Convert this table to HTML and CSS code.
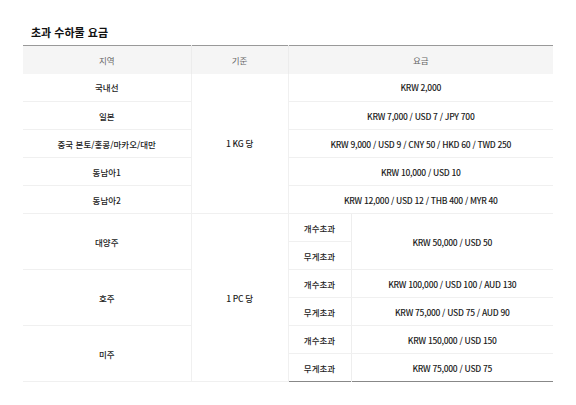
FILE: index.html
```html
<!DOCTYPE html>
<html lang="ko">
<head>
<meta charset="utf-8">
<link rel="stylesheet" href="styles.css">
</head>
<body>
<div class="page">
  <h2 class="title">초과 수하물 요금</h2>
  <table class="fee">
    <colgroup>
      <col class="c-region">
      <col class="c-basis">
      <col class="c-sub">
      <col class="c-fee">
    </colgroup>
    <thead>
      <tr><th>지역</th><th>기준</th><th colspan="2">요금</th></tr>
    </thead>
    <tbody>
      <tr><td>국내선</td><td rowspan="5" class="basis">1 KG 당</td><td colspan="2" class="price">KRW 2,000</td></tr>
      <tr><td>일본</td><td colspan="2" class="price">KRW 7,000 / USD 7 / JPY 700</td></tr>
      <tr><td>중국 본토/홍콩/마카오/대만</td><td colspan="2" class="price">KRW 9,000 / USD 9 / CNY 50 / HKD 60 / TWD 250</td></tr>
      <tr><td>동남아1</td><td colspan="2" class="price">KRW 10,000 / USD 10</td></tr>
      <tr><td>동남아2</td><td colspan="2" class="price">KRW 12,000 / USD 12 / THB 400 / MYR 40</td></tr>
      <tr><td rowspan="2">대양주</td><td rowspan="6" class="basis">1 PC 당</td><td class="sub">개수초과</td><td rowspan="2" class="price">KRW 50,000 / USD 50</td></tr>
      <tr><td class="sub">무게초과</td></tr>
      <tr><td rowspan="2">호주</td><td class="sub">개수초과</td><td class="price">KRW 100,000 / USD 100 / AUD 130</td></tr>
      <tr><td class="sub">무게초과</td><td class="price">KRW 75,000 / USD 75 / AUD 90</td></tr>
      <tr><td rowspan="2">미주</td><td class="sub">개수초과</td><td class="price">KRW 150,000 / USD 150</td></tr>
      <tr><td class="sub">무게초과</td><td class="price">KRW 75,000 / USD 75</td></tr>
    </tbody>
  </table>
</div>
</body>
</html>
```

FILE: styles.css
```css
* { box-sizing: border-box; }
html, body { margin: 0; padding: 0; background: #fff; }
body {
  font-family: "Noto Sans CJK KR", "Noto Sans", sans-serif;
  color: #222;
}
.page {
  padding: 24px 23px 0 23px;
}
.title {
  margin: 0 0 5px 8px;
  font-size: 11px;
  font-weight: 700;
  line-height: 16px;
  color: #111;
}
.fee {
  width: 530px;
  border-collapse: collapse;
  table-layout: fixed;
  border-top: 1px solid #999;
  border-bottom: 1px solid #888;
}
.c-region { width: 168px; }
.c-basis { width: 97px; }
.c-sub { width: 63px; }
.c-fee { width: 202px; }
.fee th, .fee td {
  height: 28px;
  padding: 0;
  text-align: center;
  vertical-align: middle;
  font-size: 8.5px;
  line-height: 12px;
  border-bottom: 1px solid #f0f0f0;
}
.fee th {
  background: #f5f5f5;
  color: #666;
  font-weight: 400;
  border-bottom: none;
  border-left: 1px solid #ececec;
}
.fee th:first-child { border-left: none; }
.fee td { font-weight: 500; }
.fee td.price,
.fee td.basis { letter-spacing: -0.3px; }
.fee td.basis {
  border-left: 1px solid #f0f0f0;
  border-right: 1px solid #f0f0f0;
}
.fee td.sub {
  border-right: 1px solid #eeeeee;
}
.fee tbody tr:last-child td { border-bottom: none; }
```
